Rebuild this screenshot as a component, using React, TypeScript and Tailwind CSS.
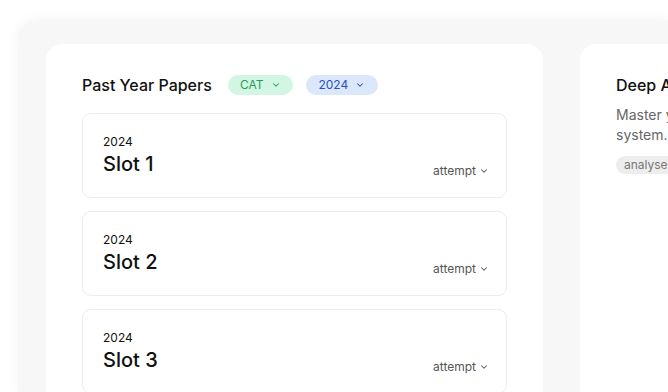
import React from "react";

function Chevron({ className = "" }: { className?: string }) {
  return (
    <svg viewBox="0 0 24 24" className={className} fill="none" stroke="currentColor" strokeWidth={2.5} strokeLinecap="round" strokeLinejoin="round">
      <path d="m6 9 6 6 6-6" />
    </svg>
  );
}

function SlotCard({ slot }: { slot: string }) {
  return (
    <div className="flex items-end justify-between rounded-[9px] border border-[#ececec] bg-white pl-[20px] pr-[17px] pt-[20px] pb-[19px]">
      <div className="flex flex-col">
        <span className="text-[12px] leading-[16px] text-[#111]">2024</span>
        <span className="text-[20px] leading-[28px] font-medium text-[#111]">{slot}</span>
      </div>
      <div className="-mb-[1px] flex items-center gap-[3px] text-[12px] leading-[16px] text-[#555]">
        <span>attempt</span>
        <Chevron className="w-[10px] h-[10px]" />
      </div>
    </div>
  );
}

export default function App() {
  return (
    <div className="min-h-screen w-full bg-white overflow-hidden" style={{ fontFamily: "Inter, 'Noto Sans', sans-serif" }}>
      <div className="ml-[18px] mt-[20px] w-[650px] h-[372px] overflow-hidden rounded-tl-[20px] bg-[#f7f7f7] shadow-[0_0_14px_rgba(0,0,0,0.05)] pl-[28px] pt-[24px] flex gap-[37px]">
        <div className="w-[497px] shrink-0 rounded-[16px] bg-white px-[36px] pt-[29px] flex flex-col gap-[16px] h-[400px]">
          <div className="flex items-center h-[24px]">
            <span className="text-[16px] font-medium text-[#111]">Past Year Papers</span>
            <div className="ml-[16px] flex h-[20px] w-[65px] items-center justify-center gap-[7px] rounded-full bg-[#d3f6e4] text-[12px] text-[#1f9d55]">
              <span>CAT</span>
              <Chevron className="w-[10px] h-[10px]" />
            </div>
            <div className="ml-[13px] flex h-[20px] w-[72px] items-center justify-center gap-[7px] rounded-full bg-[#dbe8fb] text-[12px] text-[#2a4fc4]">
              <span>2024</span>
              <Chevron className="w-[10px] h-[10px]" />
            </div>
          </div>
          <div className="flex flex-col gap-[13px]">
            <SlotCard slot="Slot 1" />
            <SlotCard slot="Slot 2" />
            <SlotCard slot="Slot 3" />
          </div>
        </div>
        <div className="w-[88px] shrink-0 overflow-hidden rounded-tl-[16px] bg-white pl-[36px] pt-[29px] h-[400px]">
          <div className="h-[24px] flex items-center text-[16px] font-medium text-[#111] whitespace-nowrap">Deep Analysis</div>
          <div className="mt-[8px] text-[14px] leading-[20px] text-[#666] whitespace-nowrap">
            <div>Master your</div>
            <div>system.</div>
          </div>
          <div className="mt-[11px] inline-flex h-[18px] items-center rounded-l-full bg-[#ededed] pl-[8px] text-[12px] text-[#777] whitespace-nowrap">analyse</div>
        </div>
      </div>
    </div>
  );
}
